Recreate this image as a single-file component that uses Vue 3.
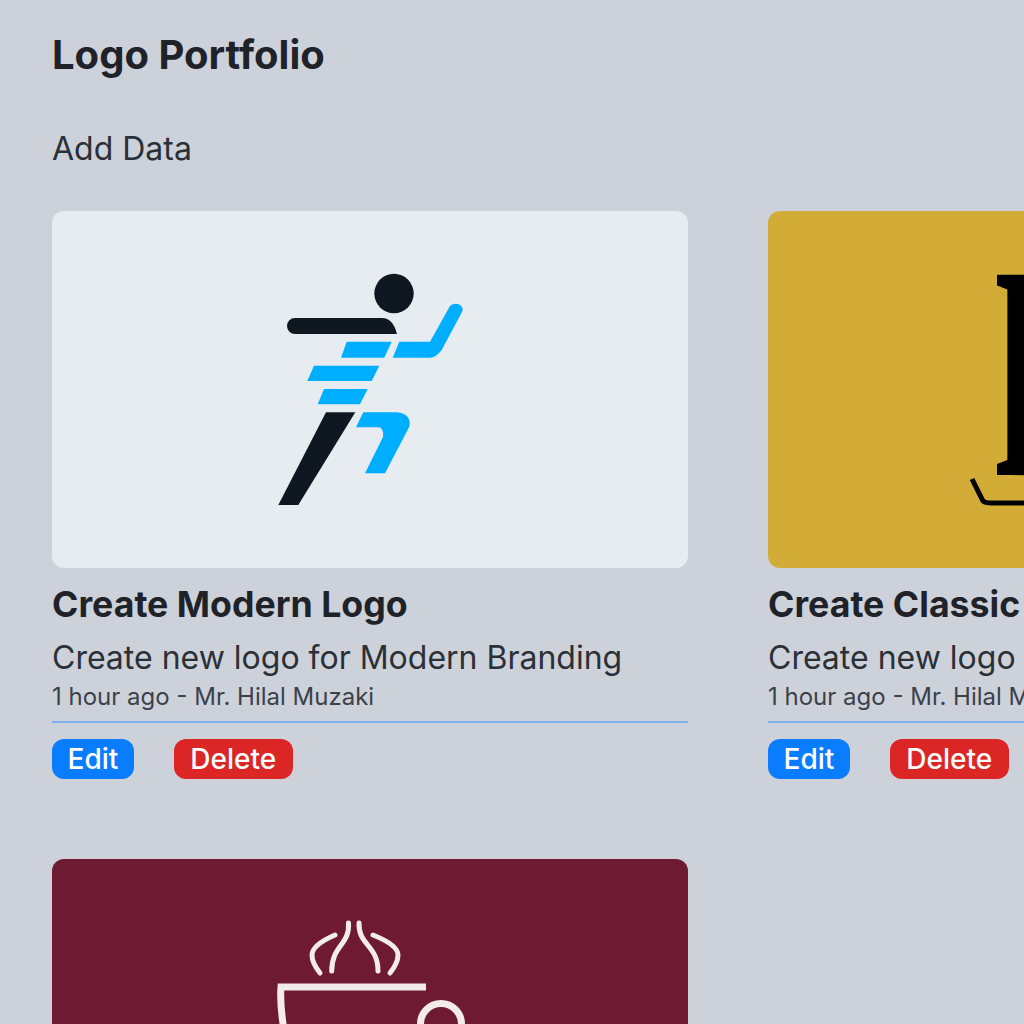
<script setup>
const cards = [
  { title: 'Create Modern Logo', sub: 'Create new logo for Modern Branding', kind: 'modern' },
  { title: 'Create Classic Logo', sub: 'Create new logo for Classic Branding', kind: 'classic' },
  { title: 'Create Coffee Logo', sub: 'Create new logo for Coffee Branding', kind: 'coffee' },
]
</script>

<template>
  <main class="page">
    <h1 class="title">Logo Portfolio</h1>
    <p class="add">Add Data</p>
    <section class="grid">
      <article v-for="c in cards" :key="c.kind" class="card">
        <div class="thumb" :class="c.kind">
          <svg v-if="c.kind === 'modern'" viewBox="52 211 636 357" class="art">
            <circle cx="394" cy="293.5" r="19.7" fill="#0f1820" />
            <path fill="#0f1820" d="M295 318H382Q393 318 397 334H295a8 8 0 0 1 0-16Z" />
            <path fill="#0f1820" d="M326 412.3H355.3L298.3 505H278.3Z" />
            <g fill="#00aeff">
              <path d="M346.7 341.7H391.7L384.3 357.7H341Z" />
              <path d="M399.3 341.7H430L450 306Q455 302 460 305Q464 308 462 312L441.7 350Q436 357.7 430 357.7H392.7Z" />
              <path d="M314 365.7H379.3L371.7 381H307.3Z" />
              <path d="M324 389H367.7L360 404.3H317.7Z" />
              <path d="M363.3 412.3H396.7Q412 414 409.3 426.7L385 473.3H365L383 437Q384 427.3 378 427.3H356Z" />
            </g>
          </svg>
          <svg v-else-if="c.kind === 'classic'" viewBox="768 211 636 357" class="art">
            <text transform="translate(995 475) scale(0.4 1)" class="letter">B</text>
            <path d="M972 479L983 501Q985 503 992 503H1200" fill="none" stroke="#000" stroke-width="5" />
          </svg>
          <svg v-else viewBox="52 859 636 357" class="art">
            <g fill="none" stroke="#f3ecea" stroke-linecap="round">
              <g stroke-width="5">
                <path d="M335 935Q312 945 312 955Q312 963 320 973" />
                <path d="M348.5 923C350 945 331.7 945 331.7 971" />
                <path d="M359 923C358 945 378 945 378 971" />
                <path d="M373 935Q398 945 398 955Q398 963 390 973" />
              </g>
              <path stroke-width="7" stroke-linecap="butt" d="M426 987H281C280 1000 281 1012 284 1030" />
              <circle cx="441" cy="1024" r="20.5" stroke-width="7" />
            </g>
          </svg>
        </div>
        <h2 class="name">{{ c.title }}</h2>
        <p class="sub">{{ c.sub }}</p>
        <p class="meta">1 hour ago - Mr. Hilal Muzaki</p>
        <div class="actions">
          <button class="btn edit">Edit</button>
          <button class="btn del">Delete</button>
        </div>
      </article>
    </section>
  </main>
</template>

<style>
html, body { margin: 0; overflow: hidden; background: #cdd2da; }
</style>

<style scoped>
.page {
  width: 1024px;
  height: 1024px;
  overflow: hidden;
  box-sizing: border-box;
  padding: 32px 0 0 52px;
  background: #cdd2da;
  font-family: Inter, "Liberation Sans", sans-serif;
  color: #1f2329;
}
.title { margin: 0; font-size: 40px; line-height: 46px; font-weight: 700; }
.add { margin: 0; padding-top: 49px; font-size: 32px; line-height: 44px; color: #2b3037; }
.grid {
  display: grid;
  grid-template-columns: repeat(2, 636px);
  column-gap: 80px;
  row-gap: 80px;
  margin-top: 40px;
  width: 1352px;
}
.thumb { height: 357px; border-radius: 12px; overflow: hidden; }
.art { display: block; width: 636px; height: 357px; }
.modern { background: #e7ecf1; }
.classic { background: #d2ac37; }
.coffee { background: #6f1a33; }
.letter { font-family: "Liberation Serif", serif; font-weight: 700; font-size: 306px; fill: #000; }
.name { margin: 14px 0 0; font-size: 35.7px; line-height: 44px; font-weight: 700; white-space: nowrap; }
.sub { margin: 10px 0 0; font-size: 32px; line-height: 44px; color: #2b3037; white-space: nowrap; }
.meta { margin: 0; font-size: 24px; line-height: 34px; color: #3b4149; white-space: nowrap; border-bottom: 2px solid #7fb0ea; padding-bottom: 7px; }
.actions { display: flex; gap: 40px; margin-top: 16px; }
.btn {
  border: 0;
  height: 40px;
  padding: 0 16px;
  border-radius: 12px;
  color: #fff;
  font: 500 28px/40px Inter, "Liberation Sans", sans-serif;
}
.edit { background: #0a7cff; padding: 0 15.5px; }
.del { background: #dc2626; padding: 0 16.5px; }
</style>
